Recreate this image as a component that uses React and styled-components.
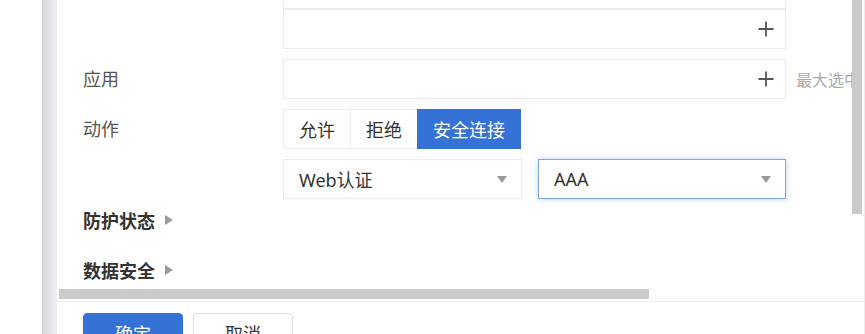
import React from 'react';
import styled, { createGlobalStyle } from 'styled-components';

const GlobalStyle = createGlobalStyle`
  html, body {
    margin: 0;
    padding: 0;
    background: #fff;
    overflow: hidden;
    font-family: "Noto Sans", "Noto Sans CJK SC", sans-serif;
  }
`;

const BLUE = '#3572d6';

const Drawer = styled.div`
  position: fixed;
  top: -47px;
  left: 42px;
  right: 0;
  display: flex;
`;

const EdgeShade = styled.div`
  width: 15px;
  flex: none;
  background: linear-gradient(to right, #d4d6d9, #eef0f2);
`;

const Panel = styled.div`
  flex: 1;
  min-width: 0;
  display: flex;
  flex-direction: column;
  background: #fff;
  border-right: 1px solid #ececec;
`;

// viewport + scroll bars, laid out as a grid
const BodyWrap = styled.div`
  display: grid;
  grid-template-columns: 1fr 10px;
  grid-template-rows: 336px 10px;
  padding: 0 2px 2px 2px;
`;

const Viewport = styled.div`
  overflow: hidden;
  min-width: 0;
`;

const VTrack = styled.div`
  display: flex;
  flex-direction: column;
`;

const HTrack = styled.div`
  display: flex;
`;

const Thumb = styled.div`
  background: #cacaca;
  flex: none;
  width: ${p => (p.$w ? `${p.$w}px` : '100%')};
  height: ${p => (p.$h ? `${p.$h}px` : '100%')};
`;

const Content = styled.div`
  width: 1066px;
  box-sizing: border-box;
  padding: 16px 0 95px 24px;
`;

const Rows = styled.div`
  display: flex;
  flex-direction: column;
  gap: 10px;
`;

const Row = styled.div`
  display: grid;
  grid-template-columns: 200px auto;
  align-items: start;
`;

const Label = styled.div`
  line-height: 40px;
  font-size: 18px;
  color: #555;
`;

const Stack = styled.div`
  display: flex;
  flex-direction: column;
  gap: ${p => p.$gap || 0}px;
`;

const Line = styled.div`
  display: flex;
  align-items: center;
  gap: ${p => p.$gap || 0}px;
`;

const PickBox = styled.div`
  box-sizing: border-box;
  width: 503px;
  height: 40px;
  border: 1px solid #ebebeb;
  display: flex;
  align-items: center;
  justify-content: flex-end;
  padding-right: 11px;
  background: #fff;
`;

const Hint = styled.span`
  margin-left: 10px;
  font-size: 16px;
  color: #aaa;
  white-space: nowrap;
`;

const Segments = styled.div`
  display: flex;
  height: 40px;
`;

const Segment = styled.button`
  box-sizing: border-box;
  height: 40px;
  padding: 0 15px;
  margin-left: -1px;
  font-family: inherit;
  font-size: 18px;
  border: 1px solid ${p => (p.$active ? BLUE : '#ececec')};
  background: ${p => (p.$active ? BLUE : '#fff')};
  color: ${p => (p.$active ? '#fff' : '#333')};
  position: relative;
  z-index: ${p => (p.$active ? 1 : 0)};
  &:first-child {
    margin-left: 0;
  }
`;

const Select = styled.div`
  box-sizing: border-box;
  width: ${p => p.$w}px;
  height: 40px;
  padding: 0 14px 0 15px;
  display: flex;
  align-items: center;
  justify-content: space-between;
  font-size: 18px;
  color: #333;
  background: #fff;
  border: 1px solid ${p => (p.$focus ? '#7ea6ea' : '#ebebeb')};
  box-shadow: ${p => (p.$focus ? '0 0 6px rgba(70, 130, 225, 0.35)' : 'none')};
`;

const Caret = styled.span`
  width: 0;
  height: 0;
  border-left: 5px solid transparent;
  border-right: 5px solid transparent;
  border-top: 7px solid #999;
`;

const Sections = styled.div`
  display: flex;
  flex-direction: column;
  gap: 8px;
`;

const SectionHead = styled.div`
  height: 42px;
  display: flex;
  align-items: center;
  gap: 10px;
  font-size: 18px;
  font-weight: 700;
  color: #333;
`;

const Arrow = styled.span`
  width: 0;
  height: 0;
  border-top: 5px solid transparent;
  border-bottom: 5px solid transparent;
  border-left: 8px solid #999;
`;

const Footer = styled.div`
  border-top: 1px solid #ececec;
  padding: 11px 26px 20px;
  display: flex;
  gap: 10px;
`;

const Button = styled.button`
  box-sizing: border-box;
  width: 100px;
  height: 40px;
  border-radius: 4px;
  font-family: inherit;
  font-size: 18px;
  border: 1px solid ${p => (p.$primary ? BLUE : '#e0e0e0')};
  background: ${p => (p.$primary ? BLUE : '#fff')};
  color: ${p => (p.$primary ? '#fff' : '#333')};
`;

const Plus = () => (
  <svg width="16" height="16" viewBox="0 0 16 16">
    <path d="M8 0.5v15M0.5 8h15" stroke="#555" strokeWidth="1.8" fill="none" />
  </svg>
);

const App = () => {
  return (
    <>
      <GlobalStyle />
      <Drawer>
        <EdgeShade />
        <Panel>
          <BodyWrap>
            <Viewport>
              <Content>
                <Rows>
                  <Row>
                    <Label />
                    <Stack>
                      <PickBox />
                      <PickBox>
                        <Plus />
                      </PickBox>
                    </Stack>
                  </Row>
                  <Row>
                    <Label>应用</Label>
                    <Line>
                      <PickBox>
                        <Plus />
                      </PickBox>
                      <Hint>最大选中数量为32</Hint>
                    </Line>
                  </Row>
                  <Row>
                    <Label>动作</Label>
                    <Stack $gap={10}>
                      <Segments>
                        <Segment>允许</Segment>
                        <Segment>拒绝</Segment>
                        <Segment $active>安全连接</Segment>
                      </Segments>
                      <Line $gap={16}>
                        <Select $w={239}>
                          Web认证
                          <Caret />
                        </Select>
                        <Select $w={248} $focus>
                          AAA
                          <Caret />
                        </Select>
                      </Line>
                    </Stack>
                  </Row>
                </Rows>
                <Sections>
                  <SectionHead>
                    防护状态
                    <Arrow />
                  </SectionHead>
                  <SectionHead>
                    数据安全
                    <Arrow />
                  </SectionHead>
                </Sections>
              </Content>
            </Viewport>
            <VTrack>
              <Thumb $h={261} />
            </VTrack>
            <HTrack>
              <Thumb $w={590} />
            </HTrack>
          </BodyWrap>
          <Footer>
            <Button $primary>确定</Button>
            <Button>取消</Button>
          </Footer>
        </Panel>
      </Drawer>
    </>
  );
};

export default App;
